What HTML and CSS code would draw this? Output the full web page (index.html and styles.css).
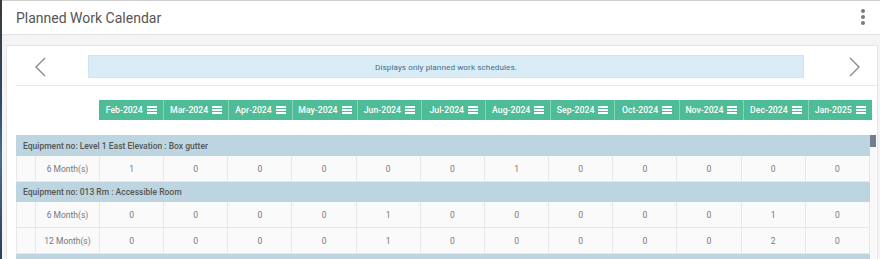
FILE: index.html
```html
<!DOCTYPE html>
<html>
<head>
<meta charset="utf-8">
<link rel="stylesheet" href="styles.css">
</head>
<body>
<div class="app">
  <div class="strip"></div>
  <div class="main">
    <header class="topbar">
      <h1 class="title">Planned Work Calendar</h1>
      <div class="kebab"><span></span><span></span><span></span></div>
    </header>
    <div class="content">
      <div class="card">
        <div class="nav">
          <div class="nav-btn nav-prev">
            <svg width="12" height="20" viewBox="0 0 12 20"><path d="M11 1 L2 10 L11 19" fill="none" stroke="#8a8a8a" stroke-width="1.4"/></svg>
          </div>
          <div class="info">Displays only planned work schedules.</div>
          <div class="nav-btn nav-next">
            <svg width="12" height="20" viewBox="0 0 12 20"><path d="M1 1 L10 10 L1 19" fill="none" stroke="#8a8a8a" stroke-width="1.4"/></svg>
          </div>
        </div>
        <div class="months">
          <div class="month">Feb-2024 <svg class="ham" viewBox="0 0 10 8"><rect y="0" width="10" height="2"/><rect y="3" width="10" height="2"/><rect y="6" width="10" height="2"/></svg></div>
          <div class="month">Mar-2024 <svg class="ham" viewBox="0 0 10 8"><rect y="0" width="10" height="2"/><rect y="3" width="10" height="2"/><rect y="6" width="10" height="2"/></svg></div>
          <div class="month">Apr-2024 <svg class="ham" viewBox="0 0 10 8"><rect y="0" width="10" height="2"/><rect y="3" width="10" height="2"/><rect y="6" width="10" height="2"/></svg></div>
          <div class="month">May-2024 <svg class="ham" viewBox="0 0 10 8"><rect y="0" width="10" height="2"/><rect y="3" width="10" height="2"/><rect y="6" width="10" height="2"/></svg></div>
          <div class="month">Jun-2024 <svg class="ham" viewBox="0 0 10 8"><rect y="0" width="10" height="2"/><rect y="3" width="10" height="2"/><rect y="6" width="10" height="2"/></svg></div>
          <div class="month">Jul-2024 <svg class="ham" viewBox="0 0 10 8"><rect y="0" width="10" height="2"/><rect y="3" width="10" height="2"/><rect y="6" width="10" height="2"/></svg></div>
          <div class="month">Aug-2024 <svg class="ham" viewBox="0 0 10 8"><rect y="0" width="10" height="2"/><rect y="3" width="10" height="2"/><rect y="6" width="10" height="2"/></svg></div>
          <div class="month">Sep-2024 <svg class="ham" viewBox="0 0 10 8"><rect y="0" width="10" height="2"/><rect y="3" width="10" height="2"/><rect y="6" width="10" height="2"/></svg></div>
          <div class="month">Oct-2024 <svg class="ham" viewBox="0 0 10 8"><rect y="0" width="10" height="2"/><rect y="3" width="10" height="2"/><rect y="6" width="10" height="2"/></svg></div>
          <div class="month">Nov-2024 <svg class="ham" viewBox="0 0 10 8"><rect y="0" width="10" height="2"/><rect y="3" width="10" height="2"/><rect y="6" width="10" height="2"/></svg></div>
          <div class="month">Dec-2024 <svg class="ham" viewBox="0 0 10 8"><rect y="0" width="10" height="2"/><rect y="3" width="10" height="2"/><rect y="6" width="10" height="2"/></svg></div>
          <div class="month">Jan-2025 <svg class="ham" viewBox="0 0 10 8"><rect y="0" width="10" height="2"/><rect y="3" width="10" height="2"/><rect y="6" width="10" height="2"/></svg></div>
        </div>
        <div class="grid-wrap">
          <table class="grid">
            <colgroup>
              <col class="c-pad"><col class="c-label">
              <col><col><col><col><col><col><col><col><col><col><col><col>
            </colgroup>
            <tbody>
              <tr class="group"><td colspan="14">Equipment no: Level 1 East Elevation : Box gutter</td></tr>
              <tr class="row"><td></td><td>6 Month(s)</td><td>1</td><td>0</td><td>0</td><td>0</td><td>0</td><td>0</td><td>1</td><td>0</td><td>0</td><td>0</td><td>0</td><td>0</td></tr>
              <tr class="group"><td colspan="14">Equipment no: 013 Rm : Accessible Room</td></tr>
              <tr class="row"><td></td><td>6 Month(s)</td><td>0</td><td>0</td><td>0</td><td>0</td><td>1</td><td>0</td><td>0</td><td>0</td><td>0</td><td>0</td><td>1</td><td>0</td></tr>
              <tr class="row"><td></td><td>12 Month(s)</td><td>0</td><td>0</td><td>0</td><td>0</td><td>1</td><td>0</td><td>0</td><td>0</td><td>0</td><td>0</td><td>2</td><td>0</td></tr>
              <tr class="group"><td colspan="14"></td></tr>
            </tbody>
          </table>
          <div class="scrollbar"><div class="thumb"></div></div>
        </div>
      </div>
    </div>
  </div>
</div>
</body>
</html>
```

FILE: styles.css
```css
* { box-sizing: border-box; }
html, body { margin: 0; padding: 0; }
body {
  width: 880px;
  height: 259px;
  overflow: hidden;
  font-family: Roboto, "Liberation Sans", sans-serif;
  background: #f4f4f4;
}
.app {
  display: flex;
  height: 259px;
}
.strip {
  width: 2px;
  flex: none;
  background: linear-gradient(#3a3a3a, #2e4a66 40%, #4d6f8a 60%, #2b3f55);
}
.main {
  flex: 1;
  min-width: 0;
  display: flex;
  flex-direction: column;
}
.topbar {
  height: 35px;
  flex: none;
  background: #fff;
  border-top: 1px solid #cfcfcf;
  border-bottom: 1px solid #e4e4e4;
  display: flex;
  align-items: center;
  justify-content: space-between;
  padding: 0 14px 0 14px;
}
.title {
  margin: 0;
  font-family: Roboto, "Liberation Sans", sans-serif;
  font-weight: normal;
  font-size: 14px;
  color: #555;
}
.kebab {
  display: flex;
  flex-direction: column;
  gap: 2px;
  margin-right: 1px;
  margin-top: -2px;
}
.kebab span {
  width: 4px;
  height: 4px;
  border-radius: 50%;
  background: #7a7a7a;
}
.content {
  flex: 1;
  padding: 10px 2px 0 4px;
}
.card {
  background: #fff;
  border: 1px solid #e6e6e6;
  border-bottom: none;
  height: 100%;
  padding: 0 0 0 9px;
}
.nav {
  display: flex;
  align-items: center;
  padding: 9px 0 7px;
  border-bottom: 1px solid #e8e8e8;
}
.nav-btn {
  display: flex;
  align-items: center;
  height: 23px;
}
.nav-prev {
  width: 72px;
  padding-left: 18px;
}
.nav-next {
  width: 73px;
  justify-content: flex-end;
  padding-right: 16px;
}
.info {
  flex: 1;
  height: 23px;
  background: #d9ecf6;
  border: 1px solid #cfe6f1;
  color: #3d6f8e;
  font-size: 8.1px;
  display: flex;
  align-items: center;
  justify-content: center;
  letter-spacing: 0.1px;
}
.months {
  margin: 14px 0 0 83px;
  width: 773px;
  height: 20px;
  display: grid;
  grid-template-columns: repeat(12, 1fr);
  background: #4dbc97;
}
.month {
  display: flex;
  align-items: center;
  justify-content: center;
  gap: 4px;
  color: #fff;
  font-weight: 500;
  font-size: 8.7px;
  border-left: 1px solid #86d3b8;
}
.month:first-child { border-left: none; }
.ham {
  width: 10px;
  height: 8px;
  fill: #fff;
}
.grid-wrap {
  display: flex;
  margin-top: 15px;
}
.grid {
  width: 854px;
  table-layout: fixed;
  border-collapse: collapse;
  font-size: 8.5px;
}
.c-pad { width: 19px; }
.c-label { width: 64px; }
.group td {
  height: 20px;
  background: #bcd5e0;
  color: #555;
  padding: 0 6px;
  border: 1px solid #bcd5e0;
  font-weight: 500;
}
.row td {
  height: 26px;
  background: #fafafa;
  border: 1px solid #e8e8e8;
  color: #777;
  text-align: center;
  padding: 0;
}
.scrollbar {
  width: 6px;
  flex: none;
  background: #f8f8f8;
}
.thumb {
  height: 12px;
  background: #6f7f8e;
}
```
